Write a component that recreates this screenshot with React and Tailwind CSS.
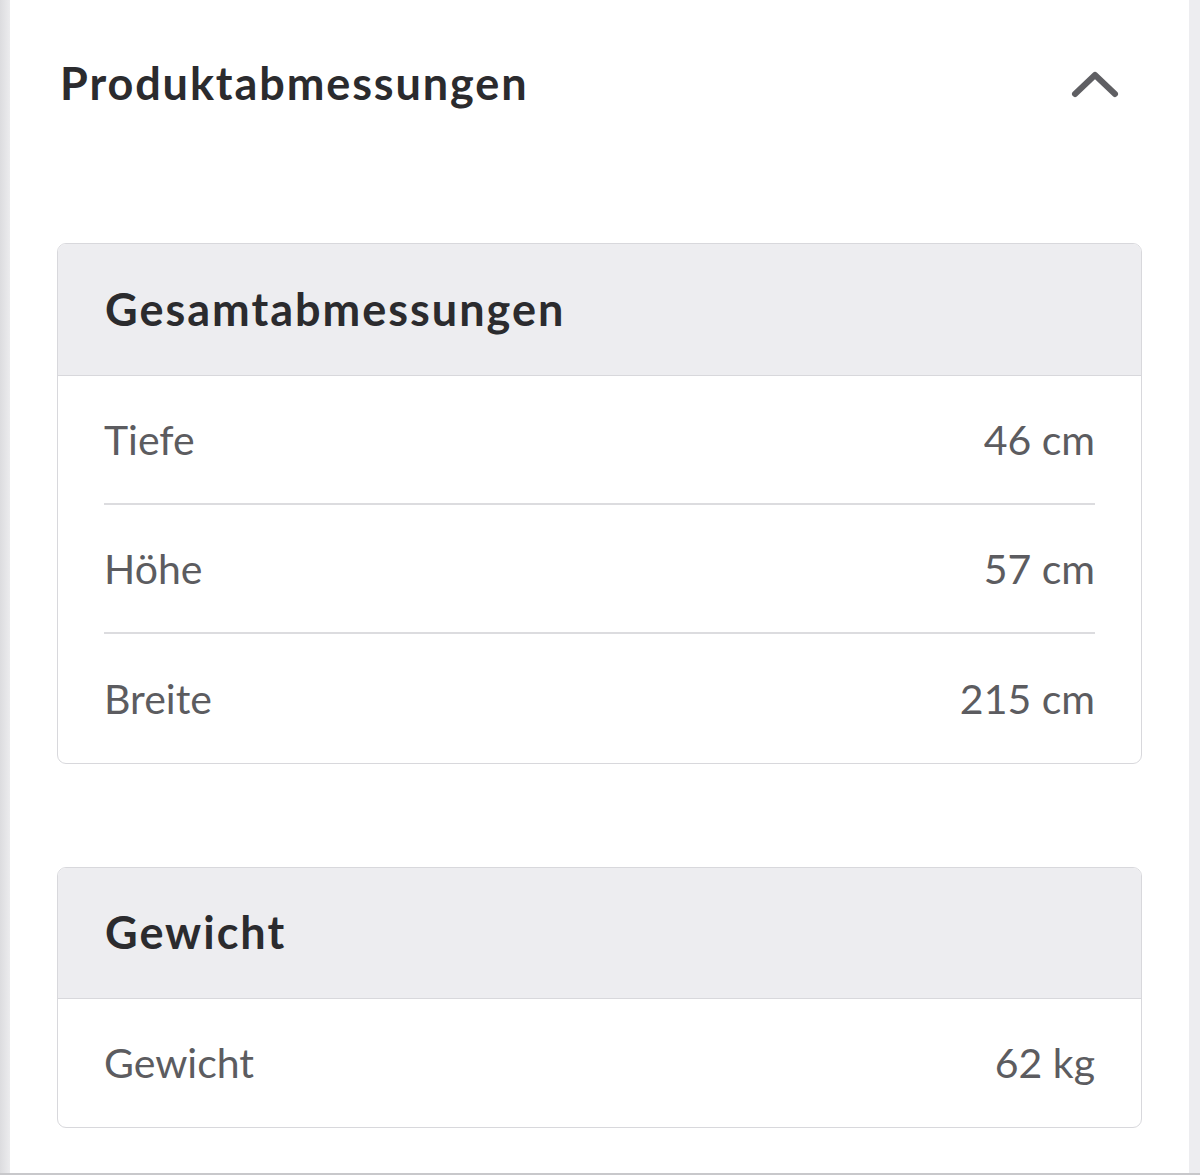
import React from "react";

const sections = [
  {
    title: "Gesamtabmessungen",
    rows: [
      { label: "Tiefe", value: "46 cm" },
      { label: "Höhe", value: "57 cm" },
      { label: "Breite", value: "215 cm" },
    ],
  },
  {
    title: "Gewicht",
    rows: [{ label: "Gewicht", value: "62 kg" }],
  },
];

function SpecCard({ title, rows, headH, rowH }) {
  return (
    <div className="mx-[47px] border border-[#d8d8dc] rounded-[9px] overflow-hidden bg-white">
      <div className={headH + " bg-[#ededf0] border-b border-[#d8d8dc] flex items-center px-[47px]"}>
        <h3 className="text-[45px] font-bold text-[#2b2b2e] tracking-[2px]">{title}</h3>
      </div>
      <div className="px-[46px]">
        {rows.map((row, i) => (
          <div
            key={row.label}
            className={
              rowH + " flex items-center justify-between text-[41px] text-[#5c5c60] " +
              (i < rows.length - 1 ? "border-b-2 border-[#dcdcdf]" : "")
            }
          >
            <span>{row.label}</span>
            <span>{row.value}</span>
          </div>
        ))}
      </div>
    </div>
  );
}

export default function App() {
  return (
    <div
      className="flex h-[1175px] w-[1200px] border-b-2 border-[#c8c8cb] overflow-hidden"
      style={{ fontFamily: "Lato, 'Open Sans', sans-serif" }}
    >
      <div className="w-[10px] bg-gradient-to-r from-[#dcdcdf] to-[#ececee]" />
      <div className="flex-1 bg-white">
        <div className="h-[168px] flex items-center justify-between pl-[50px] pr-[70px]">
          <h2 className="text-[45px] font-bold text-[#2b2b2e] tracking-[1.9px]">Produktabmessungen</h2>
          <svg width="48" height="30" viewBox="0 0 48 30" fill="none">
            <path d="M4 25 L24 6 L44 25" stroke="#5f5f63" strokeWidth="6" strokeLinecap="round" strokeLinejoin="round" />
          </svg>
        </div>
        <div className="mt-[75px]">
          <SpecCard {...sections[0]} headH="h-[132px]" rowH="h-[129px]" />
        </div>
        <div className="mt-[103px]">
          <SpecCard {...sections[1]} headH="h-[131px]" rowH="h-[128px]" />
        </div>
      </div>
      <div className="w-[11px] bg-[#ededf0]" />
    </div>
  );
}
